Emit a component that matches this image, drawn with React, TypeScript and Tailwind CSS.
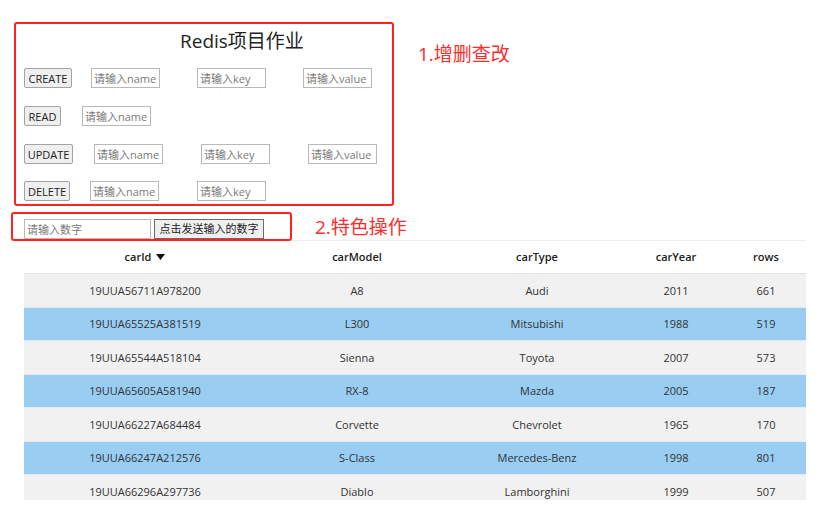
import React from "react";

const cars = [
  { carId: "19UUA56711A978200", carModel: "A8", carType: "Audi", carYear: 2011, rows: 661 },
  { carId: "19UUA65525A381519", carModel: "L300", carType: "Mitsubishi", carYear: 1988, rows: 519 },
  { carId: "19UUA65544A518104", carModel: "Sienna", carType: "Toyota", carYear: 2007, rows: 573 },
  { carId: "19UUA65605A581940", carModel: "RX-8", carType: "Mazda", carYear: 2005, rows: 187 },
  { carId: "19UUA66227A684484", carModel: "Corvette", carType: "Chevrolet", carYear: 1965, rows: 170 },
  { carId: "19UUA66247A212576", carModel: "S-Class", carType: "Mercedes-Benz", carYear: 1998, rows: 801 },
  { carId: "19UUA66296A297736", carModel: "Diablo", carType: "Lamborghini", carYear: 1999, rows: 507 },
];

const btn =
  "h-[20px] pt-px text-[11px] leading-[18px] text-[#222] bg-[#efefef] border border-[#a3a3a3] rounded-[2px] flex items-center justify-center shrink-0";
const inp =
  "h-[20px] w-[69px] text-[11px] pl-[2px] border border-[#b8b8b8] outline-none placeholder:text-[#7a7a7a] shrink-0";

const App = () => {
  return (
    <div
      className="w-[839px] h-[524px] bg-white overflow-hidden text-[#222]"
      style={{ fontFamily: '"Open Sans", "Noto Sans CJK SC", sans-serif' }}
    >
      <div className="flex items-start pt-[22px] pl-[14px]">
        <div className="w-[380px] h-[184px] border-2 border-[#ff2222] rounded-[3px]">
          <div className="pl-[164px] pt-[3px] text-[19px] leading-[28px] text-[#222]">
            Redis项目作业
          </div>
          <div className="flex flex-col gap-[18px] pl-[8px] mt-[13px]">
            <div className="flex items-center">
              <button className={btn + " w-[48px]"}>CREATE</button>
              <input className={inp + " ml-[19px]"} placeholder="请输入name" />
              <input className={inp + " ml-[37px]"} placeholder="请输入key" />
              <input className={inp + " ml-[37px]"} placeholder="请输入value" />
            </div>
            <div className="flex items-center">
              <button className={btn + " w-[37px]"}>READ</button>
              <input className={inp + " ml-[21px]"} placeholder="请输入name" />
            </div>
            <div className="flex items-center">
              <button className={btn + " w-[49px]"}>UPDATE</button>
              <input className={inp + " ml-[21px]"} placeholder="请输入name" />
              <input className={inp + " ml-[38px]"} placeholder="请输入key" />
              <input className={inp + " ml-[38px]"} placeholder="请输入value" />
            </div>
            <div className="flex items-center -mt-px">
              <button className={btn + " w-[46px]"}>DELETE</button>
              <input className={inp + " ml-[20px]"} placeholder="请输入name" />
              <input className={inp + " ml-[38px]"} placeholder="请输入key" />
            </div>
          </div>
        </div>
        <div className="ml-[24px] mt-[18px] text-[19px] leading-[28px] text-[#ff2b2b]">
          1.增删查改
        </div>
      </div>

      <div className="flex items-center mt-[6px] pl-[11px]">
        <div className="w-[281px] h-[29px] border-2 border-[#ff2222] rounded-[3px] flex items-start pl-[11px] pt-[5px]">
          <input
            className="h-[20px] w-[127px] text-[11px] pl-[2px] border border-[#b8b8b8] outline-none placeholder:text-[#7a7a7a]"
            placeholder="请输入数字"
          />
          <button className="ml-[3px] h-[20px] w-[110px] text-[11px] leading-[18px] text-[#222] bg-[#efefef] border border-[#6a6a6a] flex items-center justify-center">
            点击发送输入的数字
          </button>
        </div>
        <div className="ml-[23px] text-[19px] leading-[28px] text-[#ff2b2b]">
          2.特色操作
        </div>
      </div>

      <div className="ml-[24px] w-[782px] -mt-px h-[260px] overflow-hidden border-t border-[#ececec] text-[11px]">
        <div className="grid grid-cols-[242px_182px_178px_100px_80px] h-[33px] items-center text-center font-semibold text-[#222] border-b border-[#dfe5ec]">
          <div className="flex items-center justify-center gap-[5px]">
            carId
            <svg width="9" height="6" viewBox="0 0 9 6">
              <path d="M0 0 L9 0 L4.5 6 Z" fill="#111" />
            </svg>
          </div>
          <div>carModel</div>
          <div>carType</div>
          <div>carYear</div>
          <div>rows</div>
        </div>
        {cars.map((car, i) => (
          <div
            key={car.carId}
            className={
              "grid grid-cols-[242px_182px_178px_100px_80px] h-[33.5px] pt-px items-center text-center text-[#333] border-b border-[#e4ebf2] " +
              (i % 2 === 0 ? "bg-[#f1f1f1]" : "bg-[#99cdf1]")
            }
          >
            <div>{car.carId}</div>
            <div>{car.carModel}</div>
            <div>{car.carType}</div>
            <div>{car.carYear}</div>
            <div>{car.rows}</div>
          </div>
        ))}
      </div>
    </div>
  );
};

export default App;
